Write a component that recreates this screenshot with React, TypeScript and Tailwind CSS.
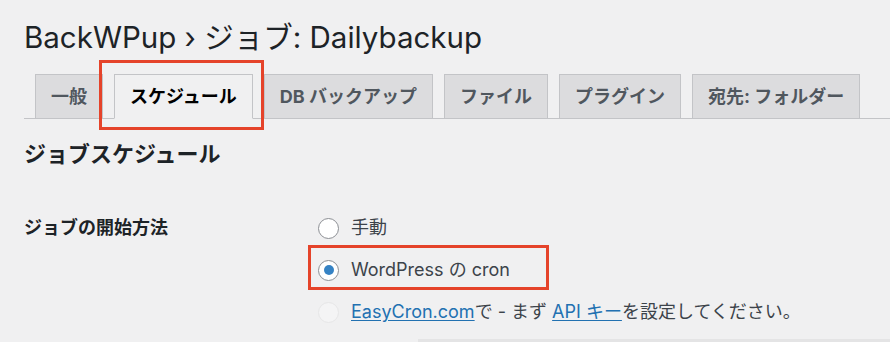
const tabs = ["一般", "スケジュール", "DB バックアップ", "ファイル", "プラグイン", "宛先: フォルダー"];

function Radio({ state }: { state: "off" | "on" | "disabled" }) {
  if (state === "disabled") {
    return <span className="size-[21px] shrink-0 rounded-full border border-[#e6e6e7] bg-[#f4f4f5]" />;
  }
  return (
    <span className="flex size-[21px] shrink-0 items-center justify-center rounded-full border border-[#8c8f94] bg-white">
      {state === "on" && <span className="size-[10px] rounded-full bg-[#3582c4]" />}
    </span>
  );
}

export default function App() {
  return (
    <div className="min-h-screen overflow-hidden bg-[#f0f0f1] pt-[19px] font-['Inter','Noto_Sans_CJK_JP',sans-serif] text-[#1d2327]">
      <h1 className="pl-6 text-[29.5px] leading-[36px] font-normal">BackWPup › ジョブ: Dailybackup</h1>

      <nav className="mt-[19px] ml-6 flex gap-[11px] border-b border-[#c3c4c7] pl-[11px]">
        {tabs.map((t, i) =>
          i === 1 ? (
            <div key={t} className="relative -mb-px">
              <span className="block border border-b-[#f0f0f1] border-[#c3c4c7] bg-[#f0f0f1] px-[15px] py-[8px] text-[18px] leading-[27px] font-bold text-black">
                {t}
              </span>
              <span className="pointer-events-none absolute top-[-14px] left-[-15px] h-[70px] w-[165px] border-[3px] border-[#e5432a]" />
            </div>
          ) : (
            <span
              key={t}
              className="-mb-px block border border-[#c3c4c7] bg-[#dcdcde] px-[15px] py-[8px] text-[18px] leading-[27px] font-bold text-[#50575e]"
            >
              {t}
            </span>
          )
        )}
      </nav>

      <h2 className="mt-5 pl-6 text-[22px] leading-[30px] font-bold">ジョブスケジュール</h2>

      <div className="mt-[47px] flex pl-6">
        <div className="w-[294px] text-[18px] leading-[24px] font-bold">ジョブの開始方法</div>
        <div className="flex flex-col gap-[18px] text-[18px] leading-[24px] text-[#3c434a]">
          <div className="flex items-center gap-3">
            <Radio state="off" />
            <span>手動</span>
          </div>
          <div className="relative flex items-center gap-3">
            <Radio state="on" />
            <span>WordPress の cron</span>
            <span className="pointer-events-none absolute top-[-13px] left-[-10px] h-[45px] w-[241px] border-[3px] border-[#e5432a]" />
          </div>
          <div className="flex items-center gap-3">
            <Radio state="disabled" />
            <span>
              <a href="#" className="text-[#2271b1] underline underline-offset-2">EasyCron.com</a>で - まず{" "}
              <a href="#" className="text-[#2271b1] underline underline-offset-2">API キー</a>を設定してください。
            </span>
          </div>
        </div>
      </div>

      <div className="mt-[15px] ml-[418px] h-[10px] bg-[#e4e4e5]" />
    </div>
  );
}
